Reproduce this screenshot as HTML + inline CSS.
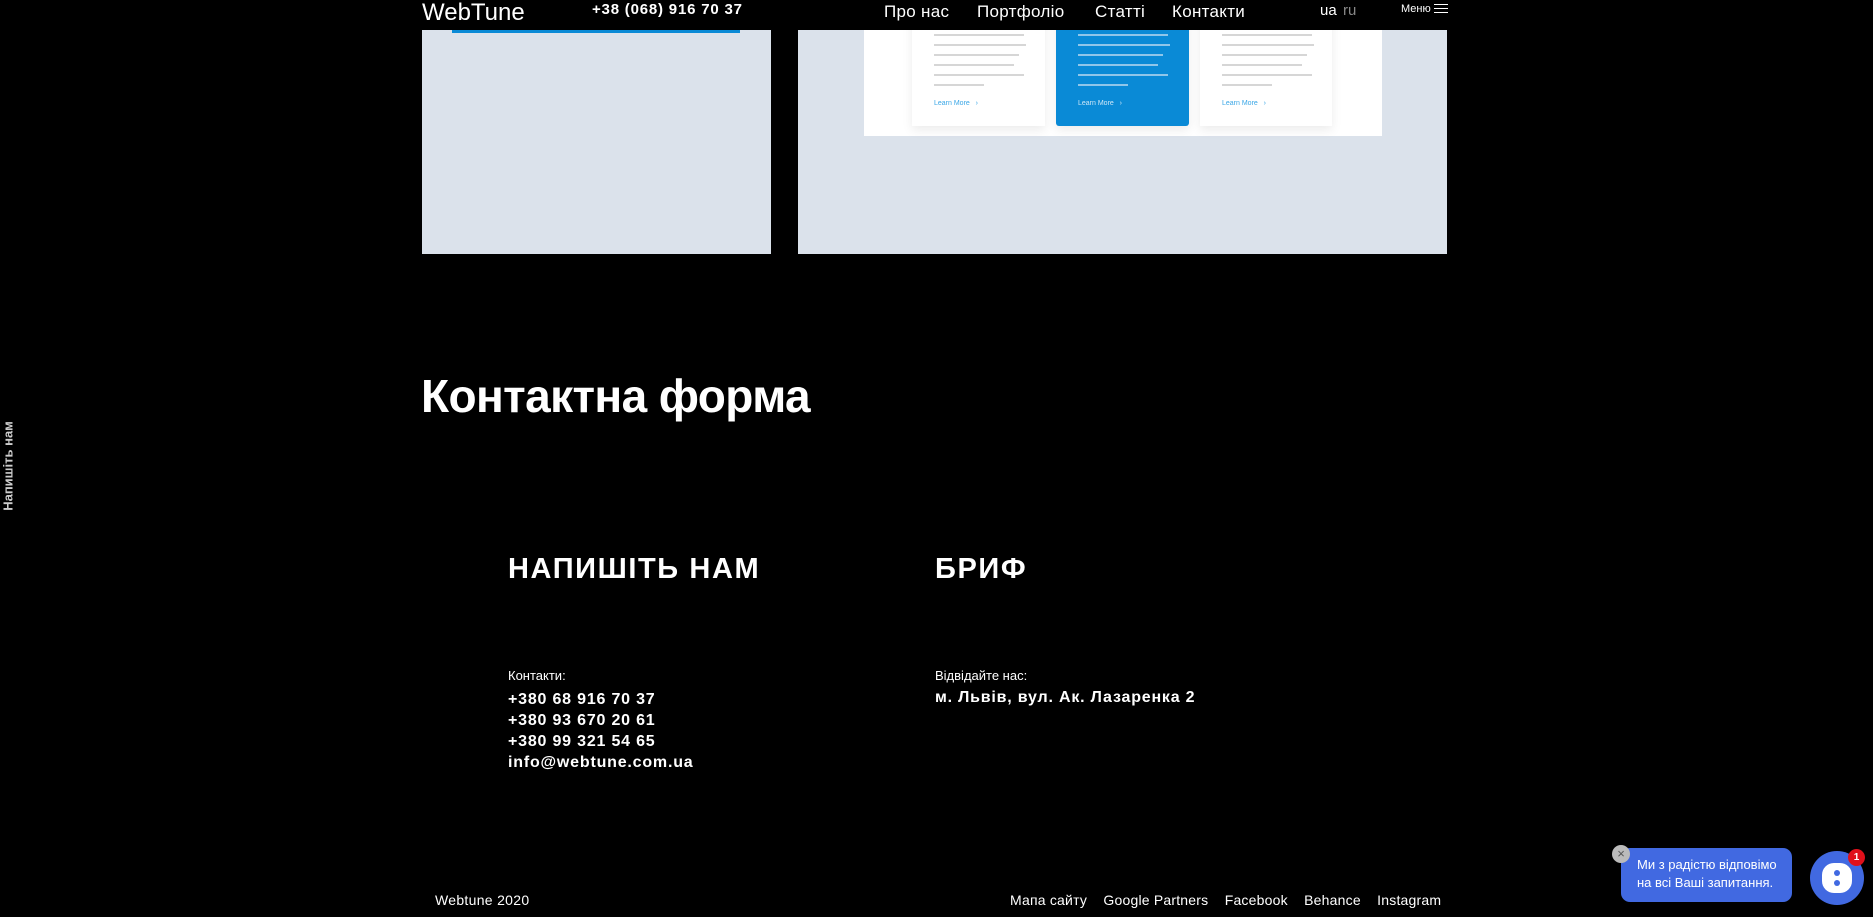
<!DOCTYPE html>
<html><head><meta charset="utf-8"><style>
*{margin:0;padding:0;box-sizing:border-box}
body{width:1873px;height:917px;background:#000;position:relative;overflow:hidden;font-family:"Liberation Sans",sans-serif;color:#fff}
.a{position:absolute;white-space:nowrap}
.hdr{position:absolute;left:0;top:0;width:1873px;height:30px;background:#000;z-index:5}
.panel{position:absolute;background:#dbe2eb}
.card{position:absolute;background:#fff;box-shadow:0 4px 10px rgba(0,0,0,.08);padding:0 0 0 22px}
.card .l{height:2px;background:#d6d6d6;margin-top:8px}
.card.b{background:#0a8ad6}
.card.b .l{background:#8fc6ea}
.lm{font-size:7px;color:#39a6e6;margin-top:14px}
.b .lm{color:#cfe8f8}
.nav{font-size:17px;top:2px;letter-spacing:.3px}
.bold{font-weight:bold}
</style></head><body>
<div class="panel" style="left:422px;top:0;width:349px;height:254px"></div>
<div class="a" style="left:452px;top:29px;width:288px;height:4px;background:#0a8ad6"></div>
<div class="panel" style="left:798px;top:0;width:649px;height:254px"></div>
<div class="a" style="left:864px;top:0;width:518px;height:136px;background:#fff"></div>
<div class="card" style="left:912px;top:0;width:133px;height:126px;padding-top:26px">
<div class="l" style="width:90px"></div><div class="l" style="width:92px"></div><div class="l" style="width:85px"></div><div class="l" style="width:80px"></div><div class="l" style="width:90px"></div><div class="l" style="width:50px"></div><div class="lm">Learn More &nbsp; ›</div></div>
<div class="card b" style="left:1056px;top:0;width:133px;height:126px;padding-top:26px;border-radius:0 0 3px 3px">
<div class="l" style="width:90px"></div><div class="l" style="width:92px"></div><div class="l" style="width:85px"></div><div class="l" style="width:80px"></div><div class="l" style="width:90px"></div><div class="l" style="width:50px"></div><div class="lm">Learn More &nbsp; ›</div></div>
<div class="card" style="left:1200px;top:0;width:132px;height:126px;padding-top:26px">
<div class="l" style="width:90px"></div><div class="l" style="width:92px"></div><div class="l" style="width:85px"></div><div class="l" style="width:80px"></div><div class="l" style="width:90px"></div><div class="l" style="width:50px"></div><div class="lm">Learn More &nbsp; ›</div></div>

<div class="hdr">
<div class="a" style="left:422px;top:-1px;font-size:24px">WebTune</div>
<div class="a bold" style="left:592px;top:1px;font-size:15px;letter-spacing:.8px">+38 (068) 916 70 37</div>
<div class="a nav" style="left:884px">Про нас</div>
<div class="a nav" style="left:977px">Портфоліо</div>
<div class="a nav" style="left:1095px">Статті</div>
<div class="a nav" style="left:1172px">Контакти</div>
<div class="a" style="left:1320px;top:2px;font-size:15px">ua</div>
<div class="a" style="left:1343px;top:2px;font-size:15px;color:#888">ru</div>
<div class="a" style="left:1401px;top:3px;font-size:11px">Меню</div>
<div class="a" style="left:1434px;top:4px;width:14px;height:1px;background:#fff;box-shadow:0 4px 0 #fff,0 8px 0 #fff"></div>
</div>

<div class="a bold" style="left:6px;top:466px;font-size:13px;color:#ccc;transform:translate(-50%,-50%) rotate(-90deg);transform-origin:center;margin-left:2px">Напишіть нам</div>
<div class="a bold" style="left:421px;top:369px;font-size:46px;letter-spacing:-0.6px">Контактна форма</div>
<div class="a bold" style="left:508px;top:553px;font-size:29px;letter-spacing:1.6px">НАПИШІТЬ НАМ</div>
<div class="a bold" style="left:935px;top:553px;font-size:29px;letter-spacing:1.6px">БРИФ</div>
<div class="a" style="left:508px;top:668px;font-size:13px">Контакти:</div>
<div class="a bold" style="left:508px;top:689px;font-size:16px;line-height:21px;letter-spacing:.8px">+380 68 916 70 37<br>+380 93 670 20 61<br>+380 99 321 54 65<br>info@webtune.com.ua</div>
<div class="a" style="left:935px;top:668px;font-size:13px">Відвідайте нас:</div>
<div class="a bold" style="left:935px;top:689px;font-size:16px;letter-spacing:.8px">м. Львів, вул. Ак. Лазаренка 2</div>

<div class="a" style="left:435px;top:892px;font-size:14px;letter-spacing:.3px">Webtune 2020</div>
<div class="a" style="left:1010px;top:892px;font-size:14px;letter-spacing:.2px">Мапа сайту &nbsp;&nbsp;&nbsp;Google Partners &nbsp;&nbsp;&nbsp;Facebook &nbsp;&nbsp;&nbsp;Behance &nbsp;&nbsp;&nbsp;Instagram</div>

<div class="a" style="left:1621px;top:848px;width:171px;height:54px;background:#4169e1;border-radius:9px;font-size:13px;line-height:18px;padding:8px 0 0 16px">Ми з радістю відповімо<br>на всі Ваші запитання.</div>
<div class="a" style="left:1612px;top:845px;width:18px;height:18px;border-radius:50%;background:#bbb;color:#555;font-size:13px;text-align:center;line-height:18px">×</div>
<div class="a" style="left:1810px;top:851px;width:54px;height:54px;border-radius:50%;background:#4169e1"></div>
<div class="a" style="left:1822px;top:863px;width:30px;height:30px;border-radius:12px;background:#fff"></div>
<div class="a" style="left:1834px;top:870px;width:6px;height:6px;border-radius:50%;background:#4169e1;box-shadow:0 10px 0 #4169e1"></div>
<div class="a bold" style="left:1848px;top:849px;width:17px;height:17px;border-radius:50%;background:#e0101a;font-size:10px;text-align:center;line-height:17px">1</div>
</body></html>
